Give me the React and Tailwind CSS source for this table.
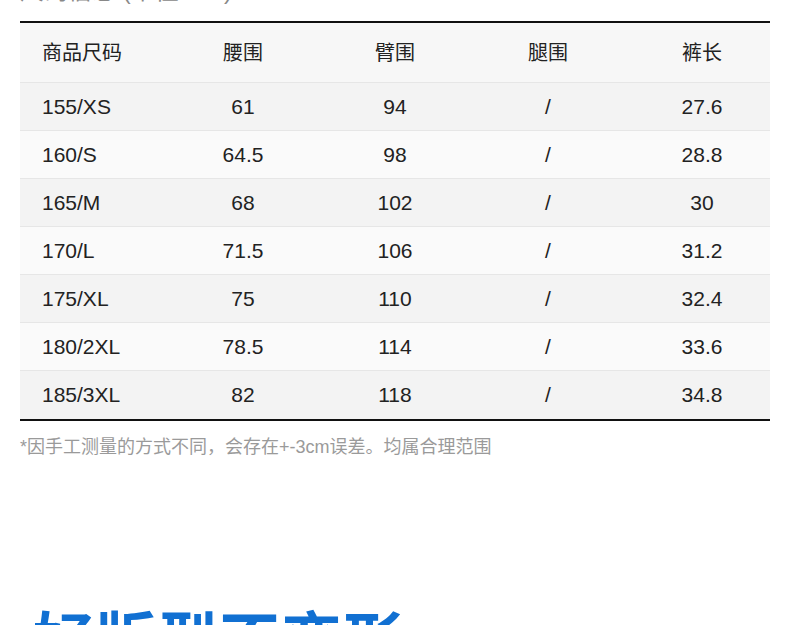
import React from "react";

const rows = [
  ["155/XS", "61", "94", "/", "27.6"],
  ["160/S", "64.5", "98", "/", "28.8"],
  ["165/M", "68", "102", "/", "30"],
  ["170/L", "71.5", "106", "/", "31.2"],
  ["175/XL", "75", "110", "/", "32.4"],
  ["180/2XL", "78.5", "114", "/", "33.6"],
  ["185/3XL", "82", "118", "/", "34.8"],
];

const font = { fontFamily: '"Liberation Sans", "Noto Sans CJK SC", sans-serif' };

function Row({ cells, bg, header, last }) {
  return (
    <div
      className={`grid grid-cols-[138px_170px_134px_172px_136px] items-center ${
        header ? "h-[60px] text-[20px]" : "h-[48px] text-[21px]"
      } ${bg} ${last ? "" : "border-b border-[#e6e6e6]"} text-[#222]`}
    >
      {cells.map((c, i) => (
        <div key={i} className={i === 0 ? "pl-[22px]" : "text-center"}>
          {c}
        </div>
      ))}
    </div>
  );
}

export default function App() {
  return (
    <div className="w-[790px] h-[625px] overflow-hidden bg-white" style={font}>
      <div className="h-[6px] overflow-hidden flex justify-between px-[20px] text-[#888]">
        <div className="-mt-[22px] text-[24px] leading-[26px] whitespace-nowrap">尺码信息 (单位: cm)</div>
        <div className="-mt-[22px] text-[24px] leading-[26px] mr-[70px]">:</div>
      </div>
      <div className="h-[15px]" />
      <div className="mx-[20px] border-t-2 border-[#111] border-b-2 border-b-[#111]">
        <Row cells={["商品尺码", "腰围", "臂围", "腿围", "裤长"]} bg="bg-[#f7f7f7]" header />
        {rows.map((r, i) => (
          <Row
            key={i}
            cells={r}
            last={i === rows.length - 1}
            bg={i % 2 === 0 ? "bg-[#f3f3f3]" : "bg-[#fafafa]"}
          />
        ))}
      </div>
      <div className="mt-[15px] px-[20px] text-[18px] leading-[22px] text-[#9a9a9a] whitespace-nowrap">
        *因手工测量的方式不同，会存在+-3cm误差。均属合理范围
      </div>
      <div className="mt-[154px] pl-[33px] text-[61px] leading-[61px] font-bold text-[#1170d2] tracking-[1px] whitespace-nowrap">
        好版型不变形
      </div>
    </div>
  );
}
